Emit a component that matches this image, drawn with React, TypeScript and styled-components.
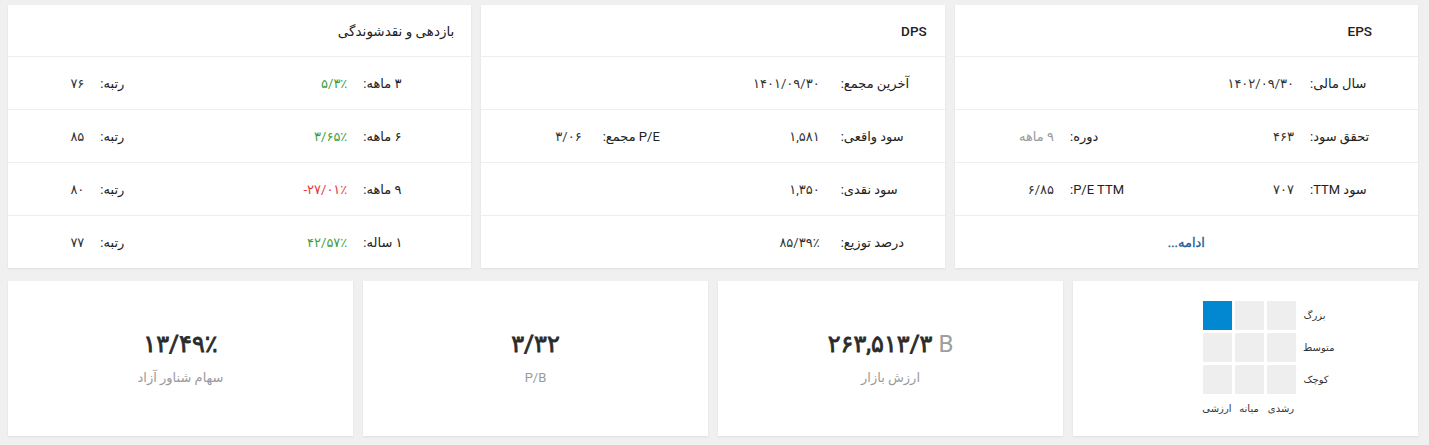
import React from 'react';
import { styled, createGlobalStyle } from 'styled-components';

type Tone = 'up' | 'down' | 'muted' | undefined;

interface ICell {
  label: string;
  value: string;
  tone?: Tone;
  rtl?: boolean;
}

interface ICard {
  title: string;
  headerPad: number;
  rowPad: number;
  cols: string;
  gap: number;
  rows: ICell[][];
  more?: boolean;
}

const cards: ICard[] = [
  {
    title: 'EPS',
    headerPad: 46,
    rowPad: 18,
    cols: '90px 118px 90px 1fr',
    gap: 16,
    more: true,
    rows: [
      [{ label: 'سال مالی:', value: '۱۴۰۲/۰۹/۳۰' }],
      [
        { label: 'تحقق سود:', value: '۴۶۳' },
        { label: 'دوره:', value: '۹ ماهه', tone: 'muted', rtl: true }
      ],
      [
        { label: 'سود TTM:', value: '۷۰۷' },
        { label: 'P/E TTM:', value: '۶/۸۵' }
      ]
    ]
  },
  {
    title: 'DPS',
    headerPad: 18,
    rowPad: 15,
    cols: '89px 109px 87px 1fr',
    gap: 21,
    rows: [
      [{ label: 'آخرین مجمع:', value: '۱۴۰۱/۰۹/۳۰' }],
      [
        { label: 'سود واقعی:', value: '۱,۵۸۱' },
        { label: 'P/E مجمع:', value: '۳/۰۶' }
      ],
      [{ label: 'سود نقدی:', value: '۱,۳۵۰' }],
      [{ label: 'درصد توزیع:', value: '۸۵/۳۹٪' }]
    ]
  },
  {
    title: 'بازدهی و نقدشوندگی',
    headerPad: 17,
    rowPad: 31,
    cols: '77px 171px 60px 1fr',
    gap: 16,
    rows: [
      [
        { label: '۳ ماهه:', value: '۵/۳٪', tone: 'up' },
        { label: 'رتبه:', value: '۷۶' }
      ],
      [
        { label: '۶ ماهه:', value: '۳/۶۵٪', tone: 'up' },
        { label: 'رتبه:', value: '۸۵' }
      ],
      [
        { label: '۹ ماهه:', value: '-۲۷/۰۱٪', tone: 'down' },
        { label: 'رتبه:', value: '۸۰' }
      ],
      [
        { label: '۱ ساله:', value: '۴۲/۵۷٪', tone: 'up' },
        { label: 'رتبه:', value: '۷۷' }
      ]
    ]
  }
];

const stats = [
  { value: '۲۶۳,۵۱۳/۳', unit: 'B', label: 'ارزش بازار' },
  { value: '۳/۳۲', label: 'P/B' },
  { value: '۱۳/۴۹٪', label: 'سهام شناور آزاد' }
];

const sizes = ['بزرگ', 'متوسط', 'کوچک'];
const styles = ['رشدی', 'میانه', 'ارزشی'];
const activeBox = { row: 0, col: 2 };

function InfoCard({ card }: { card: ICard }) {
  return (
    <Card>
      <CardHeader $pad={card.headerPad}>{card.title}</CardHeader>
      {card.rows.map((row, i) => (
        <Row key={i} $pad={card.rowPad} $cols={card.cols} $gap={card.gap}>
          {row.map((cell) => (
            <React.Fragment key={cell.label}>
              <Label>{cell.label}</Label>
              <Value $tone={cell.tone} $rtl={cell.rtl}>
                {cell.value}
              </Value>
            </React.Fragment>
          ))}
        </Row>
      ))}
      {card.more && (
        <MoreRow>
          <MoreLink href="#">ادامه...</MoreLink>
        </MoreRow>
      )}
    </Card>
  );
}

function StyleBox() {
  return (
    <BoxCard>
      <BoxGrid>
        {sizes.map((size, r) => (
          <React.Fragment key={size}>
            <SizeLabel>{size}</SizeLabel>
            {styles.map((s, c) => (
              <Square
                key={s}
                $active={r === activeBox.row && c === activeBox.col}
              />
            ))}
          </React.Fragment>
        ))}
        <span />
        {styles.map((s) => (
          <StyleLabel key={s}>{s}</StyleLabel>
        ))}
      </BoxGrid>
    </BoxCard>
  );
}

export default function App() {
  return (
    <>
      <GlobalStyle />
      <Page>
        <TopRow>
          {cards.map((card) => (
            <InfoCard key={card.title} card={card} />
          ))}
        </TopRow>
        <BottomRow>
          <StyleBox />
          {stats.map((s) => (
            <StatCard key={s.label}>
              <BigValue>
                {s.value}
                {s.unit && <Unit> {s.unit}</Unit>}
              </BigValue>
              <StatLabel>{s.label}</StatLabel>
            </StatCard>
          ))}
        </BottomRow>
      </Page>
    </>
  );
}

const GlobalStyle = createGlobalStyle`
  * {
    box-sizing: border-box;
  }
  body {
    margin: 0;
    background-color: #f0f0f0;
    font-family: Roboto, 'DejaVu Sans', sans-serif;
    color: #333;
  }
`;
const Page = styled.div`
  direction: rtl;
  display: flex;
  flex-direction: column;
  gap: 13px;
  padding: 5px 11px 8px 8px;
`;
const TopRow = styled.div`
  display: grid;
  grid-template-columns: repeat(3, 1fr);
  gap: 10px;
`;
const Card = styled.div`
  background-color: #fff;
  box-shadow: 0 1px 2px rgba(0, 0, 0, 0.08);
`;
const CardHeader = styled.div<{ $pad: number }>`
  height: 51px;
  display: flex;
  align-items: center;
  padding-right: ${(p) => p.$pad}px;
  font-size: 13.5px;
  font-weight: 500;
  color: #222;
`;
const Row = styled.div<{ $pad: number; $cols: string; $gap: number }>`
  height: 53px;
  display: grid;
  align-items: center;
  grid-template-columns: ${(p) => p.$cols};
  column-gap: ${(p) => p.$gap}px;
  padding-right: ${(p) => p.$pad}px;
  border-top: 1px solid #eeeeee;
  font-size: 13px;
`;
const Label = styled.div`
  text-align: left;
  white-space: nowrap;
  color: #222;
`;
const toneColor = (tone: Tone) =>
  tone === 'up'
    ? '#3f9d43'
    : tone === 'down'
      ? '#e53935'
      : tone === 'muted'
        ? '#9a9a9a'
        : '#333';
const Value = styled.div<{ $tone?: Tone; $rtl?: boolean }>`
  direction: ${(p) => (p.$rtl ? 'rtl' : 'ltr')};
  text-align: right;
  white-space: nowrap;
  color: ${(p) => toneColor(p.$tone)};
`;
const MoreRow = styled.div`
  height: 53px;
  display: flex;
  align-items: center;
  justify-content: center;
  border-top: 1px solid #eeeeee;
`;
const MoreLink = styled.a`
  font-size: 13px;
  color: #1d5a9c;
  text-decoration: none;
  -webkit-text-stroke: 0.3px #1d5a9c;
`;
const BottomRow = styled.div`
  display: grid;
  grid-template-columns: repeat(4, 1fr);
  gap: 10px;
`;
const StatCard = styled.div`
  height: 155px;
  display: flex;
  flex-direction: column;
  align-items: center;
  justify-content: center;
  gap: 9px;
  background-color: #fff;
  box-shadow: 0 1px 2px rgba(0, 0, 0, 0.08);
`;
const BigValue = styled.div`
  direction: ltr;
  font-size: 24px;
  font-weight: normal;
  line-height: 30px;
  color: #2b2b2b;
  -webkit-text-stroke: 0.8px #2b2b2b;
`;
const Unit = styled.span`
  color: #9e9e9e;
  -webkit-text-stroke: 0;
`;
const StatLabel = styled.div`
  font-size: 13px;
  line-height: 20px;
  color: #9a9a9a;
`;
const BoxCard = styled(StatCard)`
  padding-left: 46px;
`;
const BoxGrid = styled.div`
  display: grid;
  grid-template-columns: 36px repeat(3, 29px);
  grid-template-rows: repeat(3, 29px) 20px;
  gap: 3px;
  align-items: center;
`;
const SizeLabel = styled.span`
  padding-left: 5px;
  text-align: left;
  font-size: 10px;
  color: #333;
  white-space: nowrap;
`;
const Square = styled.span<{ $active: boolean }>`
  width: 29px;
  height: 29px;
  background-color: ${(p) => (p.$active ? '#0288d1' : '#eeeeee')};
`;
const StyleLabel = styled.span`
  align-self: end;
  text-align: center;
  font-size: 10px;
  line-height: 16px;
  color: #333;
  white-space: nowrap;
`;
